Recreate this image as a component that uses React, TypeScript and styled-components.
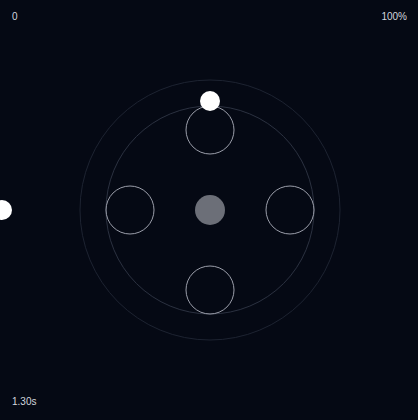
import styled, { createGlobalStyle } from "styled-components";

const GlobalStyle = createGlobalStyle`
    html, body {
        margin: 0;
        padding: 0;
        background: #050914;
    }
`;

const CENTER = 210;
const ORBIT = 80;

const satellites = [
    { x: CENTER, y: CENTER - ORBIT },
    { x: CENTER - ORBIT, y: CENTER },
    { x: CENTER + ORBIT, y: CENTER },
    { x: CENTER, y: CENTER + ORBIT },
];

function App() {
    return (
        <>
            <GlobalStyle />
            <Stage>
                <Canvas viewBox="0 0 418 420" width="418" height="420">
                    <circle cx={CENTER} cy={CENTER} r={130} fill="none" stroke="#1d2331" strokeWidth={1} />
                    <circle cx={CENTER} cy={CENTER} r={104} fill="none" stroke="#2b3140" strokeWidth={1} />
                    {satellites.map((s, i) => (
                        <circle key={i} cx={s.x} cy={s.y} r={24} fill="none" stroke="#9b9eaa" strokeWidth={1} />
                    ))}
                    <circle cx={CENTER} cy={CENTER} r={15} fill="#6c6f78" />
                    <circle cx={CENTER} cy={101} r={10} fill="#ffffff" />
                    <circle cx={2} cy={CENTER} r={10} fill="#ffffff" />
                </Canvas>
                <Overlay>
                    <TopRow>
                        <Label>0</Label>
                        <Label>100%</Label>
                    </TopRow>
                    <Label>1.30s</Label>
                </Overlay>
            </Stage>
        </>
    );
}

export default App;

const Stage = styled.div`
    display: grid;
    width: 418px;
    height: 420px;
    background: #050914;
    overflow: hidden;

    & > * {
        grid-area: 1 / 1;
    }
`;

const Canvas = styled.svg`
    display: block;
`;

const Overlay = styled.div`
    display: flex;
    flex-direction: column;
    justify-content: space-between;
    padding: 11px 11px 12px 12px;
    pointer-events: none;
`;

const TopRow = styled.div`
    display: flex;
    justify-content: space-between;
`;

const Label = styled.span`
    font-family: "Liberation Sans", Arial, sans-serif;
    font-size: 10px;
    line-height: 12px;
    color: #d2d6de;
`;
